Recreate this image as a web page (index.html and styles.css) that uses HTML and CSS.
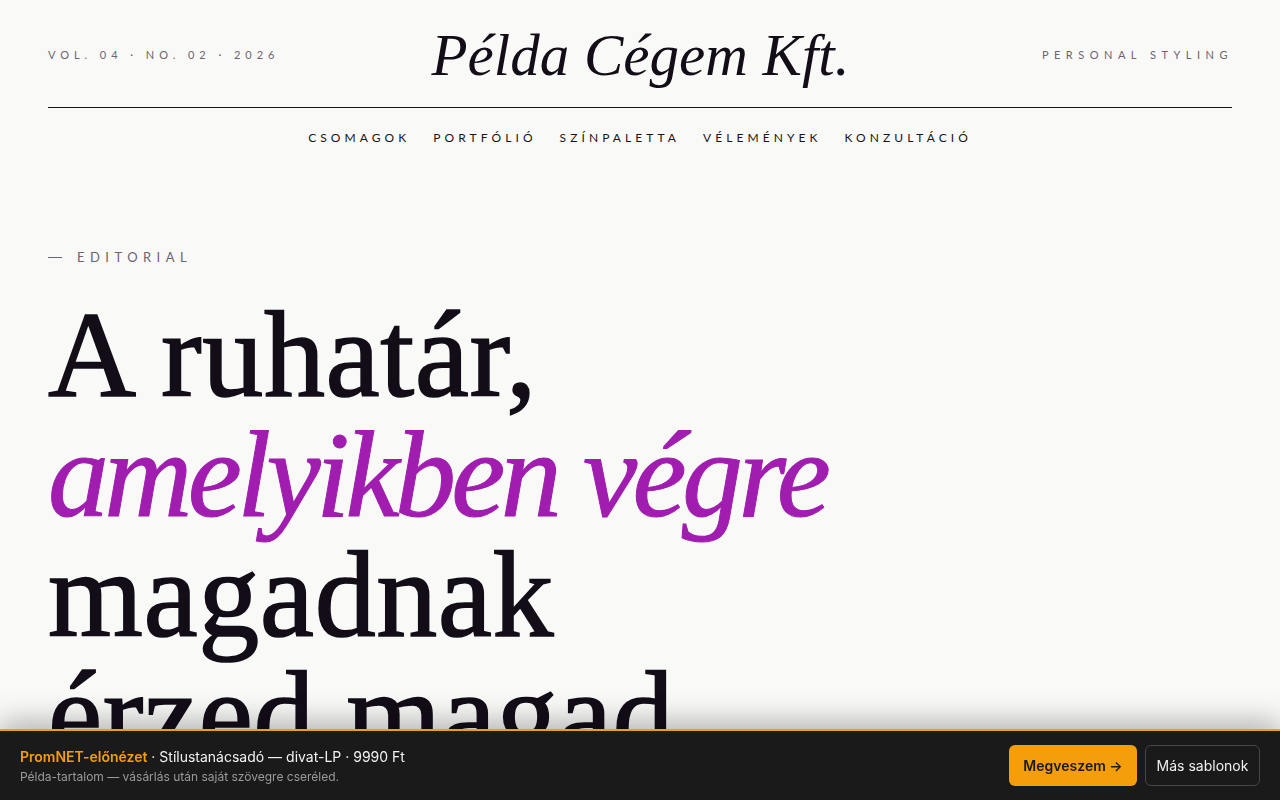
FILE: index.html
```html
<!DOCTYPE html>
<html lang="hu">
<head>
<meta charset="utf-8">
<title>Példa Cégem Kft.</title>
<link rel="stylesheet" href="styles.css">
</head>
<body>
<header class="masthead">
  <div class="masthead-top">
    <div class="meta">VOL. 04 · NO. 02 · 2026</div>
    <div class="logo">Példa Cégem Kft.</div>
    <div class="meta meta-right">PERSONAL STYLING</div>
  </div>
  <nav class="nav">
    <a href="#">CSOMAGOK</a>
    <a href="#">PORTFÓLIÓ</a>
    <a href="#">SZÍNPALETTA</a>
    <a href="#">VÉLEMÉNYEK</a>
    <a href="#">KONZULTÁCIÓ</a>
  </nav>
</header>
<main class="hero">
  <div class="kicker"><span class="dash"></span>EDITORIAL</div>
  <h1 class="headline">A ruhatár,<br><em>amelyikben végre</em><br>magadnak<br>érzed magad.</h1>
</main>
<div class="promo">
  <div class="promo-text">
    <div class="promo-title"><strong>PromNET-előnézet</strong> · Stílustanácsadó — divat-LP · 9990 Ft</div>
    <div class="promo-sub">Példa-tartalom — vásárlás után saját szövegre cseréled.</div>
  </div>
  <div class="promo-actions">
    <a class="btn btn-primary" href="#">Megveszem →</a>
    <a class="btn btn-ghost" href="#">Más sablonok</a>
  </div>
</div>
</body>
</html>
```

FILE: styles.css
```css
html, body {
  margin: 0;
  padding: 0;
}
body {
  background: #f9f9f7;
  color: #130d18;
  font-family: "Liberation Serif", serif;
  overflow: hidden;
  height: 800px;
}
a { text-decoration: none; color: inherit; }

.masthead {
  padding: 0 48px;
}
.masthead-top {
  display: flex;
  align-items: center;
  justify-content: space-between;
  height: 108px;
  border-bottom: 1px solid #1a1418;
  box-sizing: border-box;
  padding-top: 2px;
}
.meta {
  flex: 1;
  font-family: "Lato", sans-serif;
  font-weight: 400;
  font-size: 11px;
  letter-spacing: 0.45em;
  color: #6e6470;
  white-space: nowrap;
}
.meta-right {
  text-align: right;
  letter-spacing: 0.5em;
  margin-right: -1px;
}
.logo {
  font-family: "Liberation Serif", serif;
  font-style: italic;
  font-size: 59px;
  color: #130d18;
  line-height: 1;
  margin-top: 2px;
}
.nav {
  display: flex;
  justify-content: center;
  gap: 23px;
  padding-top: 22px;
}
.nav a {
  font-family: "Lato", sans-serif;
  font-size: 12px;
  letter-spacing: 0.34em;
  color: #1a1418;
}

.hero {
  padding: 104px 48px 0;
}
.kicker {
  display: flex;
  align-items: center;
  font-family: "Lato", sans-serif;
  font-size: 13px;
  letter-spacing: 0.42em;
  color: #6e6470;
}
.kicker .dash {
  width: 14px;
  height: 1px;
  background: #6e6470;
  margin-right: 15px;
}
.headline {
  margin: 30px 0 0;
  font-family: "Liberation Serif", serif;
  font-weight: 400;
  font-size: 122px;
  line-height: 120px;
  color: #130d18;
  letter-spacing: 0.005em;
  -webkit-text-stroke: 1.6px #130d18;
}
.headline em {
  font-style: italic;
  color: #a01db0;
  -webkit-text-stroke: 1px #a01db0;
  letter-spacing: -0.038em;
}

.promo {
  position: fixed;
  left: 0;
  right: 0;
  bottom: 0;
  height: 71px;
  box-sizing: border-box;
  background: #1a1a1a;
  border-top: 2px solid #f59e0b;
  box-shadow: 0 -8px 28px rgba(0, 0, 0, 0.28);
  display: flex;
  align-items: center;
  justify-content: space-between;
  padding: 0 20px;
  font-family: "Inter", sans-serif;
}
.promo-text {
  display: flex;
  flex-direction: column;
  gap: 2px;
}
.promo-title {
  font-size: 14px;
  color: #f2f2f2;
  line-height: 20px;
}
.promo-title strong {
  color: #f59e0b;
  font-weight: 600;
}
.promo-sub {
  font-size: 12px;
  color: #9a9a9a;
  line-height: 16px;
}
.promo-actions {
  display: flex;
  gap: 8px;
}
.btn {
  display: flex;
  align-items: center;
  justify-content: center;
  height: 41px;
  box-sizing: border-box;
  border-radius: 6px;
  font-size: 14px;
  padding: 0 14px;
  white-space: nowrap;
}
.btn-primary {
  background: #f59e0b;
  color: #1a1a1a;
  font-weight: 600;
  width: 128px;
}
.btn-ghost {
  border: 1px solid #474747;
  color: #f0f0f0;
  width: 115px;
}
```
